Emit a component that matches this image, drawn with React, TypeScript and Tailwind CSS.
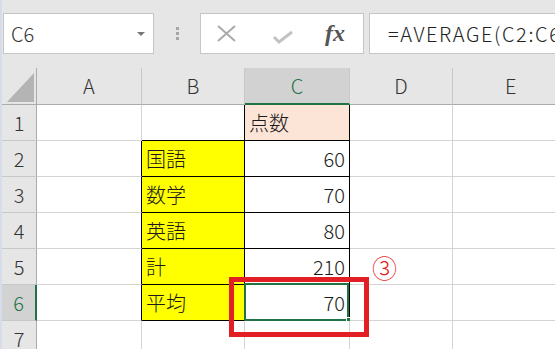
import React from "react";

// 表のデータ（B列とC列のみ中身あり）
type Cell = { text?: string; bg?: string; align?: "left" | "right"; selected?: boolean };

const rows: Cell[][] = [
  [{}, {}, { text: "点数", bg: "bg-[#fce4d6]", align: "left" }, {}, {}],
  [{}, { text: "国語", bg: "bg-[#ffff00]" }, { text: "60", align: "right" }, {}, {}],
  [{}, { text: "数学", bg: "bg-[#ffff00]" }, { text: "70", align: "right" }, {}, {}],
  [{}, { text: "英語", bg: "bg-[#ffff00]" }, { text: "80", align: "right" }, {}, {}],
  [{}, { text: "計", bg: "bg-[#ffff00]" }, { text: "210", align: "right" }, {}, {}],
  [{}, { text: "平均", bg: "bg-[#ffff00]" }, { text: "70", align: "right", selected: true }, {}, {}],
  [{}, {}, {}, {}, {}],
];

const cols = ["A", "B", "C", "D", "E"];

// 罫線のあるセル: B2:B6, C1:C6
const boxed = (r: number, c: number) => (c === 1 && r >= 1 && r <= 5) || (c === 2 && r >= 0 && r <= 5);

const font = { fontFamily: '"Noto Sans CJK JP", "Noto Sans", sans-serif' };

export default function App() {
  return (
    <div className="relative w-[555px] h-[349px] overflow-hidden flex bg-white font-light" style={font}>
      <div className="flex-1 flex flex-col border-l-2 border-[#d6dde8]">
        {/* 数式バー */}
        <div className="h-[68px] bg-[#e6e6e6] flex items-start pt-[13px] shrink-0">
          <div className="ml-px w-[151px] h-[41px] bg-white border border-[#c6c6c6] flex items-center justify-between pl-[7px] pr-[8px]">
            <span className="text-[20px] text-[#333] leading-none">C6</span>
            <span className="w-0 h-0 border-l-[4px] border-r-[4px] border-t-[4px] border-l-transparent border-r-transparent border-t-[#777]" />
          </div>
          <div className="w-[46px] h-[41px] flex flex-col items-center justify-center gap-[2px]">
            <span className="w-[3px] h-[3px] bg-[#a6a6a6]" />
            <span className="w-[3px] h-[3px] bg-[#a6a6a6]" />
            <span className="w-[3px] h-[3px] bg-[#a6a6a6]" />
          </div>
          <div className="w-[164px] h-[41px] bg-white border border-[#c6c6c6] flex items-center">
            <svg width="22" height="18" viewBox="0 0 22 18" className="ml-[15px]">
              <path d="M2 1 L19 16 M19 1 L2 16" stroke="#aaaaaa" strokeWidth="2" fill="none" />
            </svg>
            <svg width="22" height="14" viewBox="0 0 22 14" className="ml-[34px] mt-[6px]">
              <path d="M2 7 L7 12 L20 2" stroke="#c2c2c2" strokeWidth="3" fill="none" />
            </svg>
            <span
              className="ml-[31px] text-[24px] italic font-bold text-[#555] leading-none -mt-[2px]"
              style={{ fontFamily: '"Liberation Serif", serif' }}
            >
              fx
            </span>
          </div>
          <div className="ml-[5px] flex-1 h-[41px] bg-white border-y border-l border-[#c6c6c6] flex items-center pl-[18px] overflow-hidden whitespace-nowrap">
            <span className="text-[20px] text-[#222] leading-none tracking-[1.6px]">=AVERAGE(C2:C6)</span>
          </div>
        </div>

        {/* シート */}
        <div className="grid grid-cols-[35px_105px_103px_105px_103px_1fr] grid-rows-[37px_repeat(7,36px)]">
          <div className="bg-[#e6e6e6] border-r border-b border-[#ababab] flex items-end justify-end pr-[2px] pb-[2px]">
            <svg width="27" height="29" viewBox="0 0 27 29">
              <polygon points="27,0 27,29 0,29" fill="#b4b4b4" />
            </svg>
          </div>
          {cols.map((c) =>
            c === "C" ? (
              <div
                key={c}
                className="bg-[#d2d2d2] border-r border-[#c8c8c8] border-b-2 border-b-[#217346] flex items-center justify-center text-[20px] text-[#217346]"
              >
                {c}
              </div>
            ) : (
              <div
                key={c}
                className="bg-[#e6e6e6] border-r border-[#c8c8c8] border-b border-b-[#ababab] flex items-center justify-center text-[20px] text-[#333]"
              >
                {c}
              </div>
            )
          )}

          {rows.map((row, r) => (
            <React.Fragment key={r}>
              {r === 5 ? (
                <div className="bg-[#d2d2d2] border-b border-[#c8c8c8] border-r-2 border-r-[#217346] flex items-center justify-center text-[20px] text-[#217346]">
                  {r + 1}
                </div>
              ) : (
                <div className="bg-[#e6e6e6] border-b border-[#c8c8c8] border-r border-r-[#ababab] flex items-center justify-center text-[20px] leading-[24px] text-[#333]">
                  {r + 1}
                </div>
              )}
              {row.map((cell, c) => {
                const right = boxed(r, c) || boxed(r, c + 1) ? "border-r-black" : "border-r-[#d4d4d4]";
                const bottom = boxed(r, c) || boxed(r + 1, c) ? "border-b-black" : "border-b-[#d4d4d4]";
                return (
                  <div
                    key={c}
                    className={`relative border-r border-b ${right} ${bottom} ${cell.bg ?? "bg-white"} flex items-end pb-[4px] ${
                      cell.align === "right" ? "justify-end pr-[4px]" : "justify-start pl-[4px]"
                    } text-[20px] leading-[26px] text-[#1a1a1a]`}
                  >
                    {cell.text}
                    {cell.selected && (
                      <>
                        <div className="absolute -left-px -top-[2px] right-0 -bottom-px border-2 border-[#217346]" />
                        <div className="absolute -right-[4px] -bottom-[4px] w-[7px] h-[7px] bg-[#217346] border border-white" />
                      </>
                    )}
                  </div>
                );
              })}
            </React.Fragment>
          ))}
        </div>
      </div>
      <div className="w-[4px] border-l border-[#b4b4b4] bg-[#dfe4ec]" />

      {/* 注釈 */}
      <div className="absolute left-[229px] top-[277px] w-[140px] h-[60px] border-[5px] border-[#e31f26]" />
      <div className="absolute left-[372px] top-[252px] text-[25px] leading-[30px] text-[#e31f26]">③</div>
    </div>
  );
}
